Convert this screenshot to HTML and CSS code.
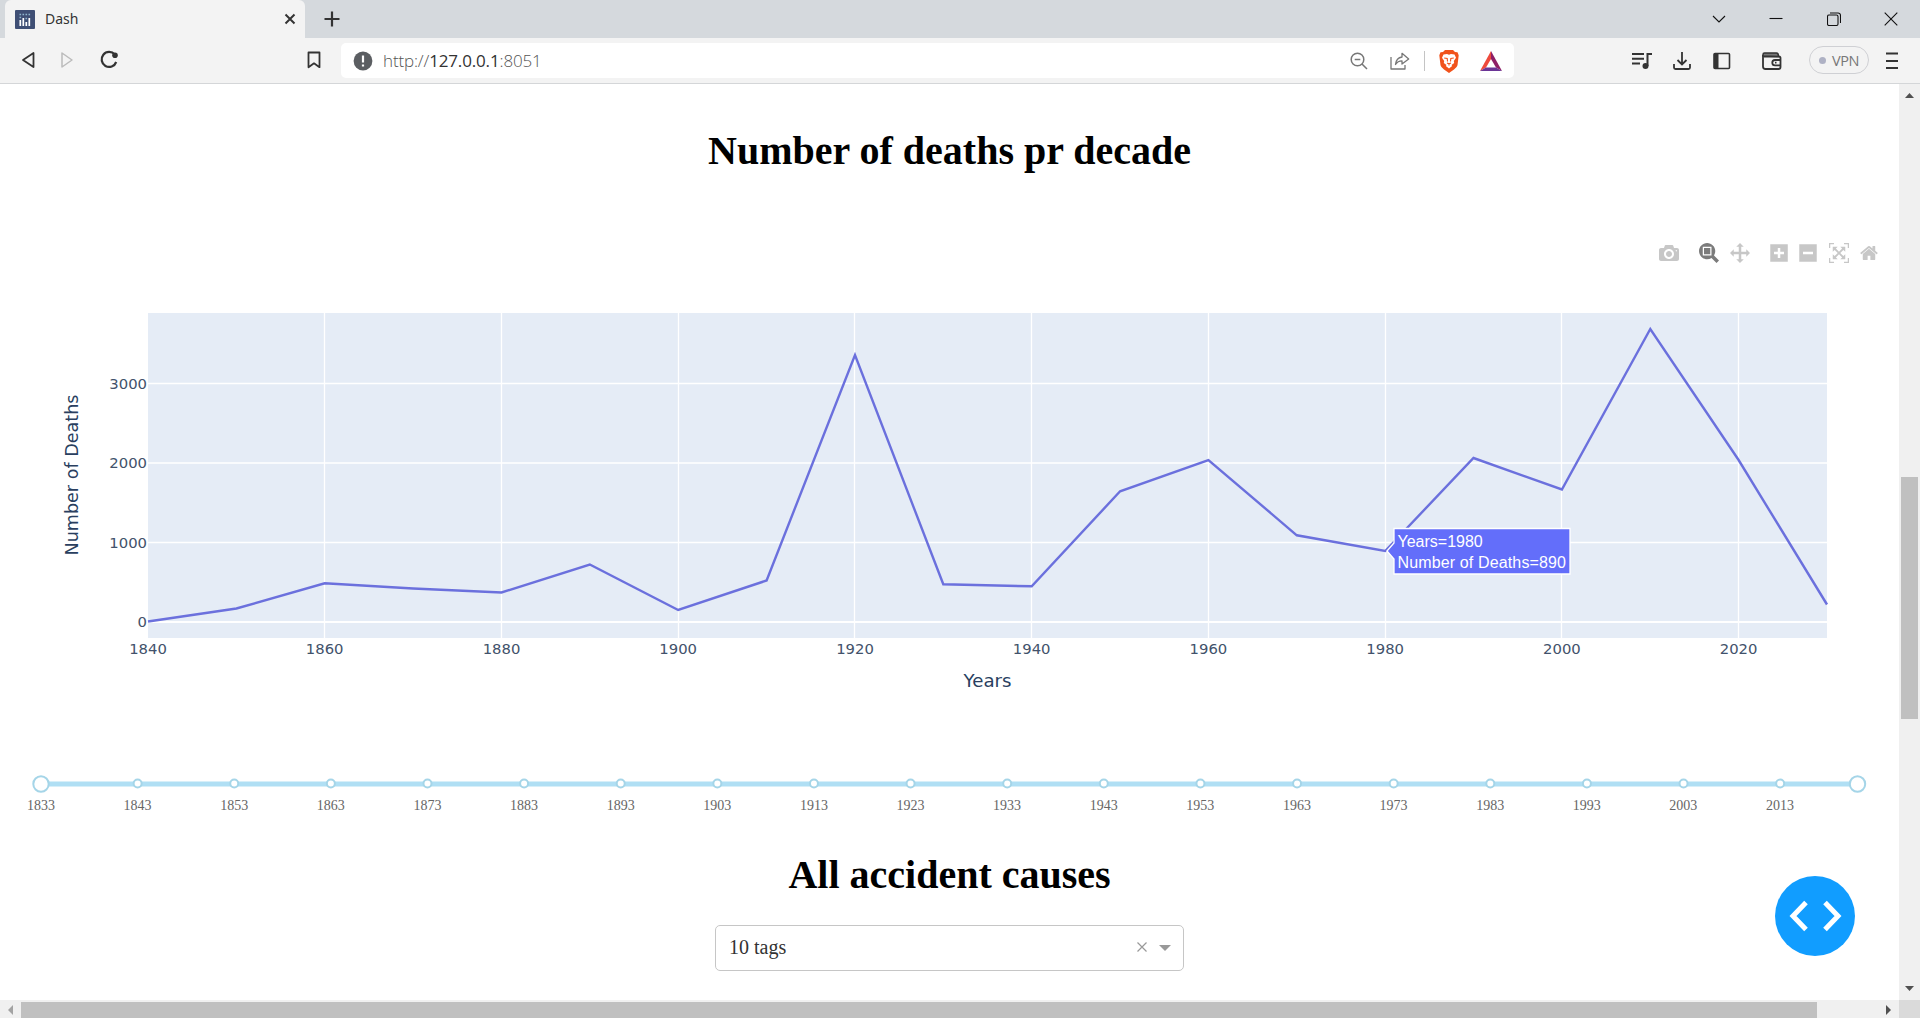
FILE: index.html
```html
<!DOCTYPE html>
<html lang="en">
<head>
<meta charset="utf-8">
<title>Dash</title>
<link rel="stylesheet" href="styles.css">
</head>
<body>
<div class="browser">
  <header class="tabstrip">
    <div class="tab">
      <svg class="favicon" width="20" height="19" viewBox="0 0 20 19"><rect width="20" height="19" rx="1" fill="#3f4f75"/><path d="M5 10v6M8 8v8M11 12v4M14 8v8" transform="translate(.3 0)" stroke="#fff" stroke-width="1.7"/><path d="M4.500 4.500h1.600M7.500 4.500h1.600M10.500 4.500h1.600M13.500 4.500h1.600M4.500 7.500h1.600M10.500 8.500h1.600" stroke="#8fb6cf" stroke-width="1.500"/></svg>
      <span class="tab-title">Dash</span>
      <svg width="12" height="12" viewBox="0 0 12 12"><path d="M1.500 1.500l9 9M10.500 1.500l-9 9" stroke="#333" stroke-width="2" fill="none"/></svg>
    </div>
    <svg class="new-tab" width="16" height="16" viewBox="0 0 16 16"><path d="M8 .5v15M.5 8h15" stroke="#333" stroke-width="2.200"/></svg>
    <div class="window-controls">
      <svg width="14" height="14" viewBox="0 0 14 14"><path d="M1 4l6 6 6-6"/></svg>
      <svg width="14" height="14" viewBox="0 0 14 14"><path d="M.5 6.500h13"/></svg>
      <svg width="14" height="14" viewBox="0 0 14 14"><rect x=".5" y="3" width="10.500" height="10.500" rx="1.500"/><path d="M3 1h8a2.500 2.500 0 0 1 2.500 2.500V11"/></svg>
      <svg width="14" height="14" viewBox="0 0 14 14"><path d="M.7.7l12.600 12.600M13.300.7L.7 13.300"/></svg>
    </div>
  </header>

  <nav class="toolbar">
    <div class="nav-buttons">
      <svg width="14" height="18" viewBox="0 0 14 18"><path d="M12.500 2v14L2 9z" fill="none" stroke="#333" stroke-width="1.800" stroke-linejoin="round"/></svg>
      <svg width="14" height="18" viewBox="0 0 14 18"><path d="M2 2v14l10-7z" fill="none" stroke="#bbb" stroke-width="1.500" stroke-linejoin="round"/></svg>
      <svg width="20" height="20" viewBox="0 0 20 20"><path d="M15.800 4.500A7.500 7.500 0 1 0 17.200 12" fill="none" stroke="#333" stroke-width="2.200"/><circle cx="16" cy="5.300" r="2.800" fill="#333"/></svg>
    </div>
    <svg class="bookmark" width="14" height="18" viewBox="0 0 14 18"><path d="M1.500 1.500h11v14.700L7 12.300l-5.500 3.900z" fill="none" stroke="#333" stroke-width="1.800" stroke-linejoin="round"/></svg>
    <div class="address">
      <svg class="info" width="20" height="20" viewBox="0 0 20 20"><circle cx="10" cy="10" r="9.400" fill="#5b5e62"/><path d="M10 4.500v7M10 13.500v2" stroke="#fff" stroke-width="2.200"/></svg>
      <span class="url">http://<b>127.0.0.1</b>:8051</span>
      <div class="address-icons">
        <svg width="18" height="18" viewBox="0 0 18 18"><g fill="none" stroke="#777" stroke-width="1.500"><circle cx="7.500" cy="7.500" r="6.300"/><path d="M12 12l5 5M4.700 7.500h5.600"/></g></svg>
        <svg width="20" height="18" viewBox="0 0 20 18"><path d="M1 5v12h14v-4M5.500 12.500C6 8 8 5.500 12 5V1.300L18.700 7 12 12V8.800c-3 0-5 1.200-6.500 3.700z" fill="none" stroke="#777" stroke-width="1.300" stroke-linejoin="round"/></svg>
        <i class="divider"></i>
        <svg width="20" height="24" viewBox="0 0 20 24"><path d="M6 1h8l2 2 2.500.3 1.200 3-1.200 10Q18 18.500 15 20.500L10 24l-5-3.500Q2 18.500 1.500 16.300L.3 6.300l1.200-3L4 3z" fill="#f1531c"/><path d="M4.500 5.500L8 5l2 .8L12 5l3.500.5 1.500 3.200-2.200 3.300.4 2-2.700 2 .7 1-3.200 2.500L6.800 17l.7-1-2.700-2 .4-2L3 8.700z" fill="#fff"/><path d="M5.200 9l3 .5.300 3M14.800 9l-3 .5-.3 3M8 14l2 .8 2-.8M10 14.500v2" stroke="#f1531c" stroke-width="1.100" fill="none"/></svg>
        <svg width="22" height="20" viewBox="0 0 22 20"><path d="M11 0L0 20l6-3.500L11 8z" fill="#ee4a3c"/><path d="M11 0l11 20-6-3.500L11 8z" fill="#8e1f66"/><path d="M0 20h22l-6-3.500H6z" fill="#6b3596"/></svg>
      </div>
    </div>
    <div class="tools">
      <svg class="t-media" width="20" height="18" viewBox="0 0 20 18"><path d="M0 2h12M0 6.700h12M0 11.500h8" stroke="#333" stroke-width="2"/><path d="M15.500 14V2H20" stroke="#333" stroke-width="2" fill="none"/><circle cx="13.500" cy="14" r="3" fill="#333"/></svg>
      <svg class="t-download" width="18" height="20" viewBox="0 0 18 20"><path d="M9 1v12M4.500 9L9 13.500 13.500 9M1 13v3.500q0 1.500 1.500 1.500h13q1.500 0 1.500-1.500V13" fill="none" stroke="#333" stroke-width="1.800"/></svg>
      <svg class="t-side" width="18" height="18" viewBox="0 0 18 18"><rect x="1" y="1.500" width="15.500" height="15" rx="1" fill="none" stroke="#333" stroke-width="1.600"/><path d="M1 1.500h4.500v15H1z" fill="#333"/></svg>
      <svg class="t-wallet" width="20" height="18" viewBox="0 0 20 18"><path d="M1 3v11.500Q1 17 3.500 17h13q2 0 2-2V6q0-1.500-1.500-1.500H2" fill="none" stroke="#333" stroke-width="1.800"/><path d="M1 4V2.500Q1 1 2.500 1h12q2 0 2 3.500z" fill="#777" stroke="#333" stroke-width="1.500"/><path d="M19 8h-6a2.700 2.700 0 0 0 0 5.400h6M13 10.700h1.500" fill="none" stroke="#333" stroke-width="1.800"/></svg>
      <span class="vpn"><i></i>VPN</span>
      <svg class="t-menu" width="12" height="18" viewBox="0 0 12 18"><path d="M0 1.500h12M0 9h12M0 16h12" stroke="#333" stroke-width="2"/></svg>
    </div>
  </nav>

  <div class="viewport">
    <main class="page">
      <h1 class="heading">Number of deaths pr decade</h1>
      <div class="modebar">
        <svg width="20" height="20" viewBox="0 0 1000 1000"><path transform="matrix(1 0 0 -1 0 850)" d="m500 450c-83 0-150-67-150-150 0-83 67-150 150-150 83 0 150 67 150 150 0 83-67 150-150 150z m400 150h-120c-16 0-34 13-39 29l-31 93c-6 15-23 28-40 28h-340c-16 0-34-13-39-28l-31-94c-6-15-23-28-40-28h-120c-55 0-100-45-100-100v-450c0-55 45-100 100-100h800c55 0 100 45 100 100v450c0 55-45 100-100 100z m-400-550c-138 0-250 112-250 250 0 138 112 250 250 250 138 0 250-112 250-250 0-138-112-250-250-250z m365 380c-19 0-35 16-35 35 0 19 16 35 35 35 19 0 35-16 35-35 0-19-16-35-35-35z"/></svg>
        <div class="mode-group">
          <svg class="active" width="20" height="20" viewBox="0 0 1000 1000"><path transform="matrix(1 0 0 -1 0 850)" d="m1000-25l-250 251c40 63 63 138 63 218 0 224-182 406-407 406-224 0-406-182-406-406s183-406 407-406c80 0 155 22 218 62l250-250 125 125z m-812 250l0 438 437 0 0-438-437 0z m62 375l313 0 0-312-313 0 0 312z"/></svg>
          <svg width="20" height="20" viewBox="0 0 1000 1000"><path transform="matrix(1 0 0 -1 0 850)" d="m1000 350l-187 188 0-125-250 0 0 250 125 0-188 187-187-187 125 0 0-250-250 0 0 125-188-188 186-187 0 125 252 0 0-250-125 0 187-188 188 188-125 0 0 250 250 0 0-126 187 188z"/></svg>
        </div>
        <div class="mode-group">
          <svg width="18" height="20" viewBox="0 0 875 1000"><path transform="matrix(1 0 0 -1 0 850)" d="m1 787l0-875 875 0 0 875-875 0z m687-500l-187 0 0-187-125 0 0 187-188 0 0 125 188 0 0 187 125 0 0-187 187 0 0-125z"/></svg>
          <svg width="18" height="20" viewBox="0 0 875 1000"><path transform="matrix(1 0 0 -1 0 850)" d="m0 788l0-876 875 0 0 876-875 0z m688-500l-500 0 0 125 500 0 0-125z"/></svg>
          <svg width="20" height="20" viewBox="0 0 1000 1000"><path transform="matrix(1 0 0 -1 0 850)" d="m250 850l-187 0-63 0 0-62 0-188 63 0 0 188 187 0 0 62z m688 0l-188 0 0-62 188 0 0-188 62 0 0 188 0 62-62 0z m-875-938l0 188-63 0 0-188 0-62 63 0 187 0 0 62-187 0z m875 188l0-188-188 0 0-62 188 0 62 0 0 62 0 188-62 0z m-125 188l-1 0-93-94-156 156 156 156 92-93 2 0 0 250-250 0 0-2 93-92-156-156-156 156 94 92 0 2-250 0 0-250 0 0 93 93 157-156-157-156-93 94 0 0 0-250 250 0 0 0-94 93 156 157 156-157-93-93 0 0 250 0 0 250z"/></svg>
          <svg width="18" height="20" viewBox="0 0 928.600 1000"><path transform="matrix(1 0 0 -1 0 850)" d="m786 296v-267q0-15-11-26t-25-10h-214v214h-143v-214h-214q-15 0-25 10t-11 26v267q0 1 0 2t0 2l321 264 321-264q1-1 1-4z m124 39l-34-41q-5-5-12-6h-2q-7 0-12 3l-386 322-386-322q-7-4-13-4-7 2-12 7l-35 41q-4 5-3 13t6 12l401 334q18 15 42 15t43-15l136-114v109q0 8 5 13t13 5h107q8 0 13-5t5-13v-227l122-102q5-5 6-12t-4-13z"/></svg>
        </div>
      </div>
      <svg class="chart" width="1899" height="400" viewBox="0 300 1899 400">
        <rect x="148" y="313" width="1679" height="325" fill="#e5ecf6"/>
        <path class="grid" d="M324.500 313v325M501.500 313v325M678.500 313v325M854.500 313v325M1031.500 313v325M1208.500 313v325M1385.500 313v325M1561.500 313v325M1738.500 313v325M148 542.500h1679M148 463h1679M148 383.500h1679"/>
        <path class="zero" d="M148 622h1679"/>
        <polyline class="series" points="148,621.500 236.400,608.500 324.700,583.300 413.100,588.500 501.500,592.500 589.800,564.500 678.200,610 766.600,580.500 855,355 943.300,584.300 1031.700,586.300 1120.100,491.300 1208.400,460 1296.800,535.300 1385.200,551 1473.500,458 1561.900,489.500 1650.300,329 1738.600,460 1827,604.500"/>
        <g class="tick end">
          <text x="147" y="627">0</text><text x="147" y="548">1000</text><text x="147" y="468">2000</text><text x="147" y="389">3000</text>
        </g>
        <g class="tick mid">
          <text x="148" y="654">1840</text><text x="324.700" y="654">1860</text><text x="501.500" y="654">1880</text><text x="678.200" y="654">1900</text><text x="855" y="654">1920</text><text x="1031.700" y="654">1940</text><text x="1208.400" y="654">1960</text><text x="1385.200" y="654">1980</text><text x="1561.900" y="654">2000</text><text x="1738.600" y="654">2020</text>
        </g>
        <text class="axis" x="987.500" y="687" textLength="48" lengthAdjust="spacingAndGlyphs">Years</text>
        <text class="axis" transform="translate(78 475) rotate(-90)" textLength="161" lengthAdjust="spacingAndGlyphs">Number of Deaths</text>
        <path class="tip" d="M1387 551l7-8v-14.500h176v45.500h-176v-15z"/>
        <text class="tip-text" x="1397.500" y="547">Years=1980</text>
        <text class="tip-text" x="1397.500" y="568" textLength="168.500">Number of Deaths=890</text>
      </svg>
      <div class="slider">
        <svg width="1899" height="20" viewBox="0 0 1899 20"><path d="M41 10h1817" stroke="#b0dff4" stroke-width="5"/><g id="dots" class="dots"></g><circle class="handle" cx="41" cy="10" r="7.700"/><circle class="handle" cx="1857.500" cy="10" r="7.700"/></svg>
        <div class="marks" id="marks"></div>
      </div>
      <h1 class="heading causes">All accident causes</h1>
      <div class="select">
        <span>10 tags</span>
        <svg class="clear" width="10" height="10" viewBox="0 0 10 10"><path d="M.5.500l9 9M9.500.500l-9 9" stroke="#999" stroke-width="1.200"/></svg>
        <svg width="12" height="6" viewBox="0 0 12 6"><path d="M0 0h12L6 6z" fill="#999"/></svg>
      </div>
      <button class="devtools" aria-label="Developer tools"><svg width="80" height="80" viewBox="0 0 80 80"><path d="M31 26.500L18 40l13 13.500M50 26.500L63 40 50 53.500" fill="none" stroke="#fff" stroke-width="5"/></svg></button>
    </main>
    <div class="vbar">
      <svg width="9" height="5" viewBox="0 0 9 5"><path d="M0 5h9L4.500 0z" fill="#505050"/></svg>
      <div class="vthumb"></div>
      <svg class="down" width="9" height="5" viewBox="0 0 9 5"><path d="M0 0h9L4.500 5z" fill="#505050"/></svg>
    </div>
    <div class="hbar">
      <svg width="5" height="10" viewBox="0 0 5 10"><path d="M5 0v10L0 5z" fill="#a3a3a3"/></svg>
      <div class="hthumb"></div>
      <svg class="right" width="5" height="10" viewBox="0 0 5 10"><path d="M0 0v10l5-5z" fill="#505050"/></svg>
    </div>
    <div class="corner"></div>
  </div>
</div>
<script src="slider.js"></script>
</body>
</html>
```
FILE: slider.js
```js
// One dot and one label for every tenth year.
const dots = document.getElementById('dots');
const marks = document.getElementById('marks');
for (let i = 0; i < 19; i++) {
  if (i > 0) {
    const dot = document.createElementNS('http://www.w3.org/2000/svg', 'circle');
    dot.setAttribute('cx', 41 + i * 96.62);
    dot.setAttribute('cy', 9.5);
    dot.setAttribute('r', 4);
    dots.appendChild(dot);
  }
  const mark = document.createElement('span');
  mark.textContent = 1833 + i * 10;
  marks.appendChild(mark);
}
```
FILE: styles.css
```css
* { box-sizing: border-box; }
body { margin: 0; overflow: hidden; background: #fff; }
svg { display: block; flex: none; }

.browser { width: 1920px; height: 1018px; display: flex; flex-direction: column; }

.tabstrip { height: 38px; flex: none; display: flex; align-items: center; padding-left: 5px; background: #d5d9dd; font-family: "Noto Sans", sans-serif; }
.tab { width: 300px; height: 38px; display: flex; align-items: center; padding: 0 9px 0 10px; background: #f3f3f3; border-radius: 6px 6px 0 0; }
.tab-title { flex: 1; margin: -2px 0 0 10px; font-size: 14px; color: #333; }
.new-tab { margin-left: 19px; }
.window-controls { margin-left: auto; margin-right: 22px; display: flex; gap: 43.500px; }
.window-controls path, .window-controls rect { fill: none; stroke: #111; stroke-width: 1.100; }

.toolbar { height: 46px; flex: none; display: flex; align-items: center; padding-left: 21px; background: #f3f3f3; border-bottom: 1px solid #d4d6d8; font-family: "Noto Sans", sans-serif; }
.nav-buttons { display: flex; align-items: center; gap: 25px; margin-top: -1px; }
.bookmark { margin: -1px 0 0 188px; }
.address { width: 1173px; height: 35px; margin-left: 20px; display: flex; align-items: center; padding: 0 12px; background: #fff; border-radius: 5px; }
.url { margin-left: 10px; font-family: "Open Sans", sans-serif; font-weight: 300; font-size: 17px; letter-spacing: -.15px; color: #555; white-space: nowrap; }
.url b { font-weight: 400; color: #333; }
.address-icons { margin-left: auto; display: flex; align-items: center; }
.address-icons svg:first-child { margin-left: 1px; }
.address-icons svg:nth-child(2) { margin-left: 22px; }
.divider { width: 1px; height: 20px; margin: 0 14px 0 14px; background: #c4c4c4; }
.address-icons svg:last-child { margin-left: 21px; }
.tools { flex: 1; display: flex; align-items: center; padding-left: 118px; }
.t-download { margin-left: 21px; }
.t-side { margin-left: 22px; }
.t-wallet { margin-left: 31px; }
.vpn { width: 60px; height: 28px; margin: -1px 0 0 27px; display: flex; align-items: center; justify-content: center; gap: 6px; border: 1px solid #cfd0d4; border-radius: 14px; font-family: "Open Sans", sans-serif; font-size: 14.500px; letter-spacing: -.4px; color: #777; }
.vpn i { width: 7px; height: 7px; border-radius: 50%; background: #aeb1c4; }
.t-menu { margin-left: 17px; }

.viewport { flex: 1; display: grid; grid-template-columns: 1899px 21px; grid-template-rows: 916px 18px; }
.page { position: relative; overflow: hidden; background: #fff; display: flex; flex-direction: column; }
.heading { margin: 44px 0 0; height: 46px; line-height: 46px; text-align: center; font-family: "Liberation Serif", "Times New Roman", serif; font-size: 40px; font-weight: 700; color: #000; }
.modebar { height: 20px; margin: 69px 21px 0 0; display: flex; justify-content: flex-end; gap: 20px; }
.mode-group { display: flex; gap: 10.500px; }
.mode-group:last-child { gap: 12px 11.500px; }
.modebar path { fill: #c7c7c7; }
.modebar .active path { fill: #7b7b7b; }

.chart { margin-top: 37px; }
.grid { fill: none; stroke: #fff; stroke-width: 1.300; }
.zero { stroke: #fff; stroke-width: 2; }
.series { fill: none; stroke: #6b70dd; stroke-width: 2.400; }
.chart text { font-family: "DejaVu Sans", Verdana, sans-serif; fill: #2a3f5f; }
.chart .tick text { font-size: 14.800px; fill: #42526b; }
.end { text-anchor: end; }
.mid, .axis { text-anchor: middle; }
.chart .axis { font-size: 17.500px; }
.tip { fill: #636efa; stroke: #fff; stroke-width: 1.300; }
.chart .tip-text { font-family: "Liberation Sans", Arial, sans-serif; font-size: 16px; fill: #fff; }

.slider { margin-top: 74px; }
.dots circle { fill: #fff; stroke: #a5d5e8; stroke-width: 2; }
.handle { fill: #fff; stroke: #a5d5e8; stroke-width: 2; }
.marks { display: flex; margin: 4px 0 0 -7.300px; height: 16px; }
.marks span { width: 96.620px; flex: none; text-align: center; font: 14px/16px "Liberation Serif", "Times New Roman", serif; color: #666; }
.causes { margin-top: 37.500px; }
.select { width: 469px; height: 46px; margin: 27px 0 0 715px; display: flex; align-items: center; padding: 0 12px 0 13px; border: 1px solid #c6c6c6; border-radius: 5px; font: 20px "Liberation Serif", "Times New Roman", serif; color: #333; }
.select span { flex: 1; }
.clear { margin: -2px 12px 0 0; }
.devtools { position: absolute; left: 1775px; top: 792px; width: 80px; height: 80px; padding: 0; border: 0; border-radius: 50%; background: #119dff; }

.vbar { background: #f0f0f0; display: flex; flex-direction: column; align-items: center; padding: 9px 0; }
.vthumb { width: 17px; height: 242px; margin-top: 379px; background: #c0c0c0; }
.down { margin-top: auto; }
.hbar { background: #f0f0f0; display: flex; align-items: center; padding: 2px 8px 0; }
.hthumb { width: 1796px; height: 16px; margin-left: 8px; background: #c0c0c0; }
.right { margin-left: auto; }
.corner { background: #dadada; }
```
